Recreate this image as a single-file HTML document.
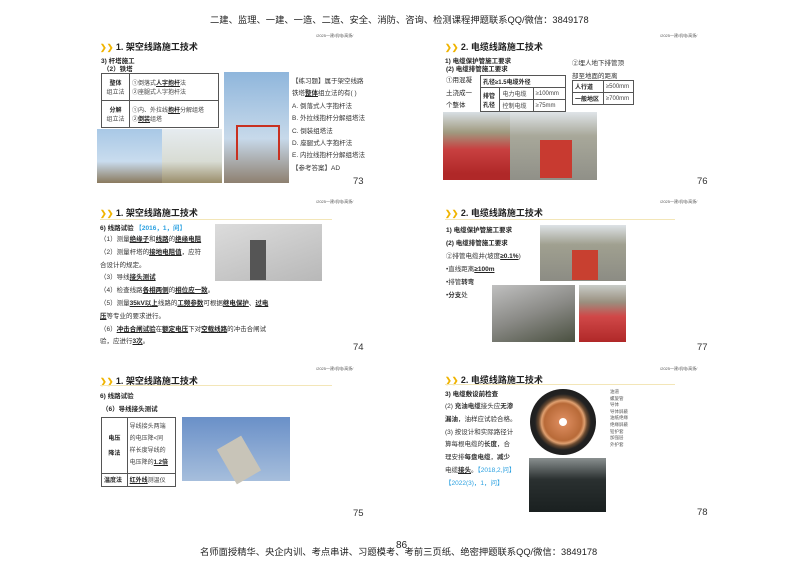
<!DOCTYPE html>
<html><head><meta charset="utf-8"><style>
*{margin:0;padding:0;box-sizing:border-box}
body{width:800px;height:566px;background:#fff;position:relative;overflow:hidden;font-family:"Liberation Sans","Noto Sans CJK SC",sans-serif;color:#222}
.a{position:absolute;white-space:nowrap}
.hd{color:#222}
.t{font-size:9px;font-weight:bold;color:#222}
.t b{color:#f0b400;font-size:8px}
.s{font-size:6.5px;color:#333}
.sb{font-size:6.5px;font-weight:bold;color:#222}
.tiny{font-size:4px;color:#555}
.n{font-size:9.5px;color:#333}
.ln{position:absolute;height:1px;background:#f3e6b8}
.img{position:absolute}
table{border-collapse:collapse;position:absolute;font-size:6px;color:#444}
td{border:1px solid #555;padding:1px 2px}
u{text-decoration:underline;font-weight:bold;color:#222}
.bl{color:#2aa0e0}
</style></head><body>
<div class="a hd" style="left:210px;top:12px;font-size:9.3px">二建、监理、一建、一造、二造、安全、消防、咨询、检测课程押题联系QQ/微信：3849178</div>
<div class="a hd" style="left:200px;top:544px;font-size:9.3px">名师面授精华、央企内训、考点串讲、习题模考、考前三页纸、绝密押题联系QQ/微信：3849178</div>
<div class="a" style="left:396px;top:540px;font-size:10px">86</div>

<!-- slide 73 -->
<div class="a tiny" style="left:316px;top:33px">/2025一建/机电/高扬/</div>
<div class="a t" style="left:100px;top:40px"><b>❯❯</b> 1. 架空线路施工技术</div>
<div class="a sb" style="left:101px;top:55px">3) 杆塔施工</div>
<div class="a sb" style="left:103px;top:63px">（2）铁塔</div>
<table style="left:101px;top:73px;width:118px;height:55px">
<tr><td style="text-align:center;width:28px"><b style="color:#222">整体</b><br>组立法</td><td>①倒落式<u>人字抱杆</u>法<br>②座腿式人字抱杆法</td></tr>
<tr><td style="text-align:center"><b style="color:#222">分解</b><br>组立法</td><td>①内、外拉线<u>抱杆</u>分解组塔<br>②<u>倒装</u>组塔</td></tr></table>
<div class="img" style="left:97px;top:129px;width:65px;height:54px;background:linear-gradient(#a8c8e6,#c9dcee 60%,#8a7a5e)"></div>
<div class="img" style="left:162px;top:129px;width:60px;height:54px;background:linear-gradient(#e6ecf0,#d8dcd4 60%,#9a8d6a)"></div>
<div class="img" style="left:224px;top:72px;width:65px;height:111px;background:linear-gradient(#8fb6dc,#c7d9ea 60%,#8e8070)"></div>
<div class="img" style="left:236px;top:125px;width:44px;height:2px;background:#c83020"></div>
<div class="img" style="left:236px;top:125px;width:2px;height:35px;background:#c83020"></div>
<div class="img" style="left:278px;top:125px;width:2px;height:35px;background:#c83020"></div>
<div class="a s" style="left:292px;top:76px;line-height:12.4px">【练习题】属于架空线路<br>铁塔<u>整体</u>组立法的有(  )<br>A. 倒落式人字抱杆法<br>B. 外拉线抱杆分解组塔法<br>C. 倒装组塔法<br>D. 座腿式人字抱杆法<br>E. 内拉线抱杆分解组塔法<br>【参考答案】AD</div>
<div class="a n" style="left:353px;top:176px">73</div>

<!-- slide 76 -->
<div class="a tiny" style="left:660px;top:33px">/2025一建/机电/高扬/</div>
<div class="a t" style="left:445px;top:40px"><b>❯❯</b> 2. 电缆线路施工技术</div>
<div class="a sb" style="left:445px;top:55px">1) 电缆保护管施工要求</div>
<div class="a sb" style="left:446px;top:63px">(2) 电缆排管施工要求</div>
<div class="a s" style="left:446px;top:75px;line-height:12.5px;color:#222">①用混凝<br>土浇成一<br>个整体</div>
<table style="left:480px;top:75px;width:86px;height:34px">
<tr><td colspan="3"><b style="color:#222">孔径≥1.5电缆外径</b></td></tr>
<tr><td rowspan="2"><b style="color:#222">排管<br>孔径</b></td><td>电力电缆</td><td>≥100mm</td></tr>
<tr><td>控制电缆</td><td>≥75mm</td></tr></table>
<div class="a s" style="left:572px;top:58px;line-height:12.5px">②埋人地下排管顶<br>部至地面的距离</div>
<table style="left:572px;top:80px;width:62px;height:23px">
<tr><td><b style="color:#222">人行道</b></td><td>≥500mm</td></tr>
<tr><td><b style="color:#222">一般地区</b></td><td>≥700mm</td></tr></table>
<div class="img" style="left:443px;top:112px;width:68px;height:68px;background:linear-gradient(#d8dfe4,#a09a80 30%,#c84040 55%,#b02828 90%)"></div>
<div class="img" style="left:510px;top:112px;width:87px;height:68px;background:linear-gradient(#dfe4e8,#a8a89a 35%,#909088)"></div>
<div class="img" style="left:540px;top:140px;width:32px;height:38px;background:#c83a30"></div>
<div class="a n" style="left:697px;top:176px">76</div>

<!-- slide 74 -->
<div class="a tiny" style="left:316px;top:199px">/2025一建/机电/高扬/</div>
<div class="a t" style="left:100px;top:206px"><b>❯❯</b> 1. 架空线路施工技术</div>
<div class="ln" style="left:100px;top:219px;width:232px"></div>
<div class="a sb" style="left:100px;top:222px">6) 线路试验 <span class="bl">【2016，1，问】</span></div>
<div class="a s" style="left:100px;top:234px;line-height:12.8px">（1）测量<u>绝缘子</u>和<u>线路</u>的<u>绝缘电阻</u><br>（2）测量杆塔的<u>接地电阻值</u>，应符<br>合设计的规定。<br>（3）导线<u>接头测试</u><br>（4）检查线路<u>各相两侧</u>的<u>相位应一致</u>。<br>（5）测量<u>35kV以上</u>线路的<u>工频参数</u>可根据<u>继电保护</u>、<u>过电</u><br><u>压</u>等专业的要求进行。<br>（6）<u>冲击合闸试验</u>在<u>额定电压</u>下对<u>空载线路</u>的冲击合闸试<br>验，应进行<u>3次</u>。</div>
<div class="img" style="left:215px;top:224px;width:107px;height:57px;background:linear-gradient(160deg,#dcdcdc,#b8b8b8)"></div>
<div class="img" style="left:250px;top:240px;width:16px;height:40px;background:#555"></div>
<div class="a n" style="left:353px;top:342px">74</div>

<!-- slide 77 -->
<div class="a tiny" style="left:660px;top:199px">/2025一建/机电/高扬/</div>
<div class="a t" style="left:445px;top:206px"><b>❯❯</b> 2. 电缆线路施工技术</div>
<div class="ln" style="left:445px;top:219px;width:230px"></div>
<div class="a sb" style="left:446px;top:225px;line-height:12.5px">1) 电缆保护管施工要求<br>(2) 电缆排管施工要求</div>
<div class="a s" style="left:446px;top:250px">②排管电缆井(坡度<u>≥0.1%</u>)</div>
<div class="a s" style="left:446px;top:263px;line-height:13px">•直线距离<u>≥100m</u><br>•排管<b>转弯</b><br>•<b>分支</b>处</div>
<div class="img" style="left:540px;top:225px;width:86px;height:56px;background:linear-gradient(#dde2e6,#a0a090 35%,#8c8c84)"></div>
<div class="img" style="left:572px;top:250px;width:26px;height:30px;background:#c84030"></div>
<div class="img" style="left:492px;top:285px;width:83px;height:57px;background:linear-gradient(160deg,#c0c0c0,#8a8a86 50%,#4a5040)"></div>
<div class="img" style="left:579px;top:285px;width:47px;height:57px;background:linear-gradient(#c8ccc8,#9a9080 30%,#d04848 55%,#b02828)"></div>
<div class="a n" style="left:697px;top:342px">77</div>

<!-- slide 75 -->
<div class="a tiny" style="left:316px;top:366px">/2025一建/机电/高扬/</div>
<div class="a t" style="left:100px;top:374px"><b>❯❯</b> 1. 架空线路施工技术</div>
<div class="ln" style="left:100px;top:385px;width:232px"></div>
<div class="a sb" style="left:100px;top:390px">6) 线路试验</div>
<div class="a sb" style="left:102px;top:403px">（6）导线接头测试</div>
<table style="left:101px;top:417px;width:75px;height:70px">
<tr><td style="text-align:center"><b style="color:#222">电压<br><br>降法</b></td><td style="line-height:12px">导线接头两端<br>的电压降&lt;同<br>样长度导线的<br>电压降的<u>1.2倍</u></td></tr>
<tr><td><b style="color:#222">温度法</b></td><td><u>红外线</u>测温仪</td></tr></table>
<div class="img" style="left:182px;top:417px;width:108px;height:64px;background:linear-gradient(#6a90c8,#a6bedc)"></div>
<div class="img" style="left:225px;top:440px;width:28px;height:40px;background:#c8c4b8;transform:rotate(-30deg)"></div>
<div class="a n" style="left:353px;top:508px">75</div>

<!-- slide 78 -->
<div class="a tiny" style="left:660px;top:366px">/2025一建/机电/高扬/</div>
<div class="a t" style="left:445px;top:373px"><b>❯❯</b> 2. 电缆线路施工技术</div>
<div class="ln" style="left:445px;top:384px;width:230px"></div>
<div class="a sb" style="left:445px;top:388px">3) 电缆敷设前检查</div>
<div class="a s" style="left:445px;top:401px;line-height:12.8px">(2) <b>充油电缆</b>接头应<b>无渗</b><br><b>漏油</b>，油样应试验合格。<br>(3) 按设计和实际路径计<br>算每根电缆的<b>长度</b>，合<br>理安排<b>每盘电缆</b>，<b>减少</b><br>电缆<u>接头</u>。<span class="bl">【2018,2,问】</span><br><span class="bl">【2022(3)，1，问】</span></div>
<div class="img" style="left:530px;top:389px;width:66px;height:66px;border-radius:50%;background:radial-gradient(circle,#fff 0 8%,#d8885a 9%,#b86a38 40%,#e0a070 46%,#6a4a30 52%,#222 60%,#111 100%)"></div>
<div class="a tiny" style="left:610px;top:389px;line-height:6.6px;font-size:4.5px">油道<br>螺旋管<br>导体<br>导体屏蔽<br>油纸绝缘<br>绝缘屏蔽<br>铅护套<br>加强层<br>外护套</div>
<div class="img" style="left:529px;top:458px;width:77px;height:54px;background:linear-gradient(#8a9090,#2a3030 40%,#1a2020)"></div>
<div class="a n" style="left:697px;top:507px">78</div>
</body></html>
